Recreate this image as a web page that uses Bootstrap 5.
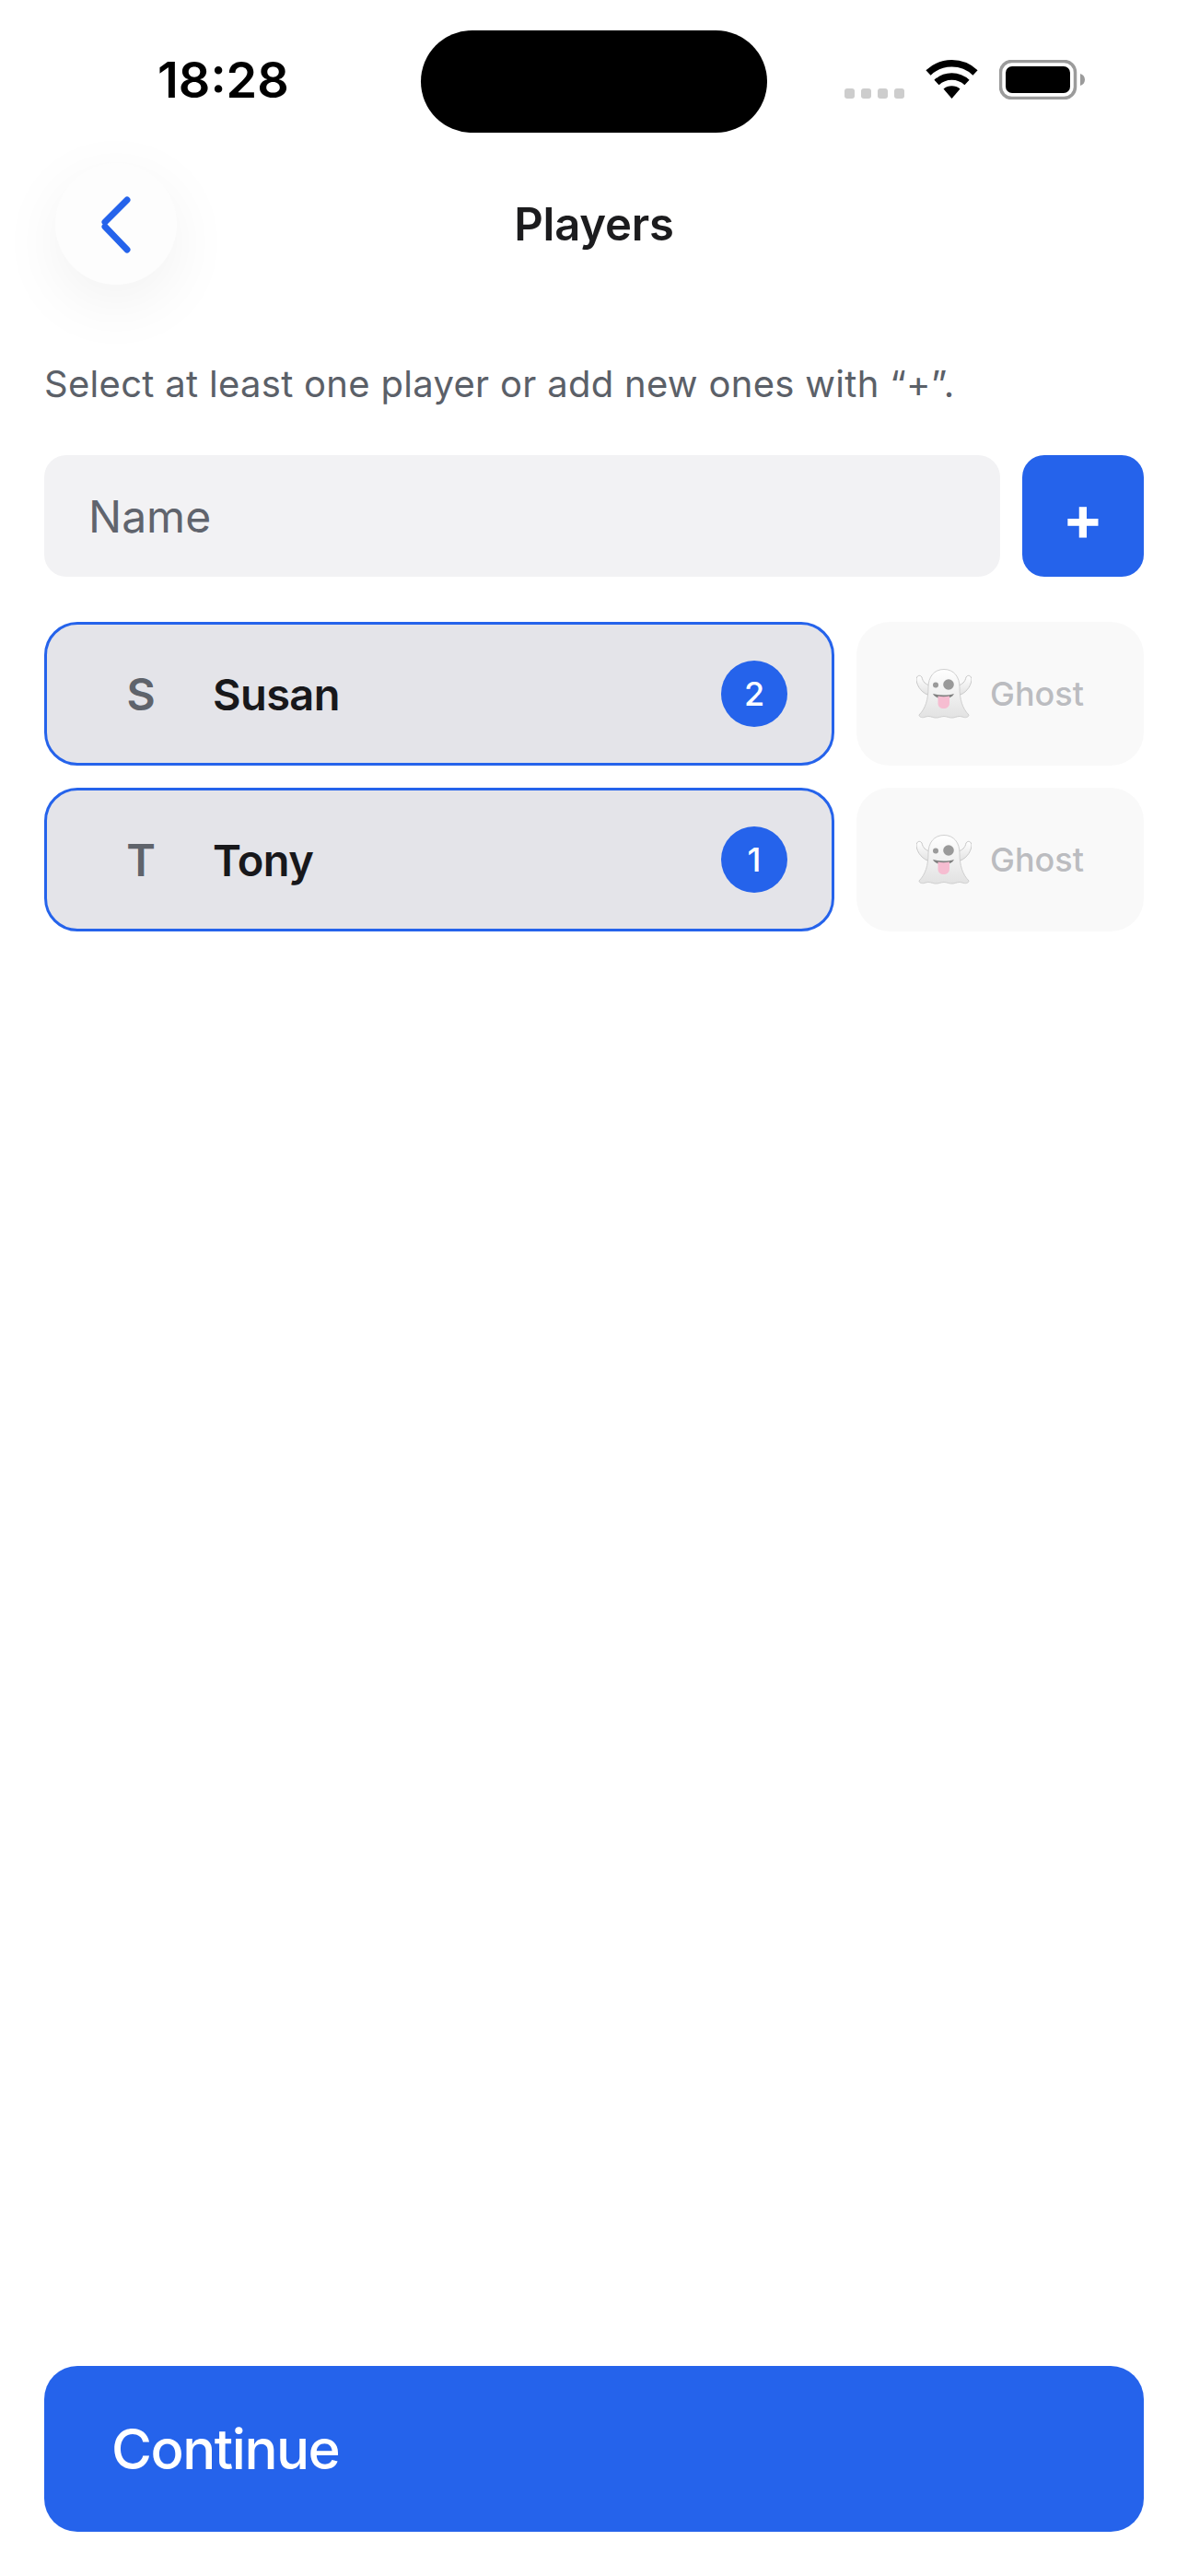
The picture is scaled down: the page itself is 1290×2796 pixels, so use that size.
<!DOCTYPE html>
<html lang="en">
<head>
    <meta charset="UTF-8">
    <meta name="viewport" content="width=device-width, initial-scale=1.0">
    <title>Players</title>
    <link href="https://cdn.jsdelivr.net/npm/bootstrap@5.3.0/dist/css/bootstrap.min.css" rel="stylesheet">
    <style>
        body {
            background-color: #fff;
            font-family: "Inter", "Liberation Sans", sans-serif;
            color: #18181b;
        }
        .screen {
            min-height: 100vh;
            padding-bottom: 48px;
        }
        .status-bar {
            height: 144px;
            padding-top: 33px;
        }
        .status-time {
            width: 457px;
            padding-left: 171px;
            font-size: 54px;
            font-weight: 600;
            line-height: 70px;
            padding-top: 19px;
            color: #000;
        }
        .island {
            width: 376px;
            height: 111px;
            background-color: #000;
            border-radius: 56px;
        }
        .status-icons {
            padding-left: 84px;
            padding-top: 32px;
        }
        .signal-dots {
            gap: 7px;
            padding-top: 31px;
            margin-right: 23px;
        }
        .signal-dots span {
            width: 11px;
            height: 11px;
            border-radius: 3px;
            background-color: #cdcdcd;
        }
        .wifi-icon {
            width: 57px;
            height: 42px;
            margin-right: 23px;
        }
        .battery-icon {
            width: 93px;
            height: 43px;
        }
        .page-header {
            margin-top: 33px;
            padding: 0 60px;
        }
        .back-btn {
            width: 132px;
            height: 132px;
            padding: 2px 0 0;
            border: 0;
            border-radius: 50%;
            background-color: #fdfdfd;
            box-shadow: 0 20px 70px rgba(0, 0, 0, .06);
        }
        .back-spacer {
            width: 132px;
        }
        .page-title {
            font-size: 49px;
            font-weight: 600;
            color: #1c1c1e;
            margin: 3px 0 0;
            letter-spacing: -.2px;
        }
        .content-area {
            padding: 0 48px;
        }
        .hint-text {
            font-size: 40px;
            line-height: 56px;
            color: #5b6068;
            margin: 80px 0 49px;
            letter-spacing: .3px;
        }
        .name-input.form-control {
            height: 132px;
            border: 0;
            border-radius: 24px;
            background-color: #f2f2f4;
            padding: 0 48px;
            font-size: 48px;
            color: #18181b;
        }
        .name-input::placeholder {
            color: #60646d;
            opacity: 1;
        }
        .add-btn.btn {
            flex: 0 0 132px;
            height: 132px;
            padding: 3px 0 0;
            border: 0;
            border-radius: 24px;
            background-color: #2563eb;
            color: #fff;
            font-size: 66px;
            font-weight: 700;
            line-height: 1;
        }
        .player-list {
            margin-top: 49px;
        }
        .player-row {
            height: 156px;
        }
        .player-btn {
            flex: 1 1 auto;
            border: 3px solid #2563eb;
            border-radius: 36px;
            background-color: #e4e4e9;
            padding: 0 48px 0 72px;
        }
        .player-letter {
            width: 60px;
            margin-right: 48px;
            text-align: center;
            font-size: 48px;
            font-weight: 600;
            color: #5f636b;
            padding-top: 2px;
        }
        .player-name {
            font-size: 47px;
            font-weight: 600;
            letter-spacing: -.6px;
            color: #18181b;
            padding-top: 2px;
        }
        .order-dot {
            width: 72px;
            height: 72px;
            border-radius: 50%;
            background-color: #2563eb;
            color: #fff;
            font-size: 36px;
            font-weight: 500;
        }
        .ghost-btn {
            flex: 0 0 312px;
            border-radius: 36px;
            background-color: #f9f9f9;
            color: #bbbcc0;
            font-size: 36px;
            font-weight: 500;
            gap: 20px;
        }
        .ghost-icon {
            width: 60px;
            height: 54px;
        }
        .continue-btn.btn {
            height: 180px;
            margin: 0 48px;
            padding: 0 0 0 73px;
            border: 0;
            border-radius: 36px;
            background-color: #2563eb;
            color: #fff;
            font-size: 60px;
            font-weight: 500;
            letter-spacing: -1.5px;
            text-align: left;
        }
    </style>
</head>
<body>
    <div class="screen d-flex flex-column">
        <!-- status bar -->
        <div class="status-bar d-flex">
            <div class="status-time">18:28</div>
            <div class="island"></div>
            <div class="status-icons d-flex align-items-start">
                <div class="signal-dots d-flex"><span></span><span></span><span></span><span></span></div>
                <svg class="wifi-icon" viewBox="0 0 57 42" fill="none">
                    <path d="M3 14 A37 37 0 0 1 54 14" stroke="#000" stroke-width="7.5"/>
                    <path d="M12 24.5 A24 24 0 0 1 45 24.5" stroke="#000" stroke-width="7.5"/>
                    <path d="M28.500 42 L19.500 31.500 A14 14 0 0 1 37.500 31.500 Z" fill="#000"/>
                </svg>
                <svg class="battery-icon" viewBox="0 0 93 43" fill="none">
                    <rect x="1.500" y="1.500" width="81" height="40" rx="12" stroke="#9b9b9b" stroke-width="3.500"/>
                    <rect x="7" y="7" width="70" height="29" rx="7" fill="#000"/>
                    <path d="M88 15 C91 16 93 18 93 21.500 C93 25 91 27 88 28 Z" fill="#9b9b9b"/>
                </svg>
            </div>
        </div>

        <!-- header -->
        <div class="page-header d-flex align-items-center justify-content-between">
            <button class="back-btn d-flex align-items-center justify-content-center" type="button" aria-label="Back">
                <svg width="32" height="62" viewBox="0 0 32 62" fill="none">
                    <path d="M28 4 L4 28 M4 33 L28 58" stroke="#2563eb" stroke-width="7" stroke-linecap="round"/>
                </svg>
            </button>
            <h1 class="page-title">Players</h1>
            <div class="back-spacer"></div>
        </div>

        <div class="content-area">
            <p class="hint-text">Select at least one player or add new ones with “+”.</p>

            <div class="d-flex" style="gap: 24px">
                <input class="name-input form-control" type="text" placeholder="Name">
                <button class="add-btn btn" type="button">+</button>
            </div>

            <div class="player-list d-flex flex-column" style="gap: 24px" id="playerList"></div>
        </div>

        <button class="continue-btn btn mt-auto" type="button">Continue</button>
    </div>

    <script>
        const players = [
            { letter: 'S', name: 'Susan', order: 2 },
            { letter: 'T', name: 'Tony', order: 1 }
        ];

        const ghostSvg = `
            <svg class="ghost-icon" viewBox="0 0 60 54">
                <defs>
                    <linearGradient id="ghostFill" x1="0" y1="0" x2="0" y2="1">
                        <stop offset="0" stop-color="#ffffff"/>
                        <stop offset="1" stop-color="#e2e2e2"/>
                    </linearGradient>
                </defs>
                <path d="M15 29 C7 27 1 20 0 12 C0 7 4 6 6 9 C7 14 10 17 15 18 Z M45 29 C53 27 59 20 60 12 C60 7 56 6 54 9 C53 14 50 17 45 18 Z" fill="url(#ghostFill)" stroke="#c8c8c8" stroke-width="1"/>
                <path d="M30 .500 C19 .500 13 9 13 20 C13 33 10 43 3 50 C3 52.500 7 53.500 10 52 C14 50.500 17 52.500 20 53 C24 53.500 27 51.500 30 51.500 C33 51.500 36 53.500 40 53 C43 52.500 46 50.500 50 52 C53 53.500 57 52.500 57 50 C50 43 47 33 47 20 C47 9 41 .500 30 .500 Z" fill="url(#ghostFill)" stroke="#cfcfcf" stroke-width="1"/>
                <circle cx="21" cy="17.500" r="3" fill="#9a9a9a"/>
                <circle cx="35" cy="17" r="5.800" fill="#999999"/>
                <path d="M18 27 C25 29 34 29 41 27 C39 31 35 32 30 32 C25 32 20 31 18 27 Z" fill="#808080"/>
                <path d="M23.500 29.500 C27 30.500 32 30.500 36 29.500 L36 37 C36 41 33 43 30 43 C26 43 23.500 41 23.500 37 Z" fill="#f6bdd1"/>
            </svg>`;

        // Fill the list of players
        document.getElementById('playerList').innerHTML = players.map(p => `
            <div class="player-row d-flex" style="gap: 24px">
                <div class="player-btn d-flex align-items-center">
                    <span class="player-letter">${p.letter}</span>
                    <span class="player-name flex-grow-1">${p.name}</span>
                    <span class="order-dot d-flex align-items-center justify-content-center">${p.order}</span>
                </div>
                <div class="ghost-btn d-flex align-items-center justify-content-center">${ghostSvg}<span>Ghost</span></div>
            </div>`).join('');
    </script>
    <script src="https://cdn.jsdelivr.net/npm/bootstrap@5.3.0/dist/js/bootstrap.bundle.min.js"></script>
</body>
</html>
